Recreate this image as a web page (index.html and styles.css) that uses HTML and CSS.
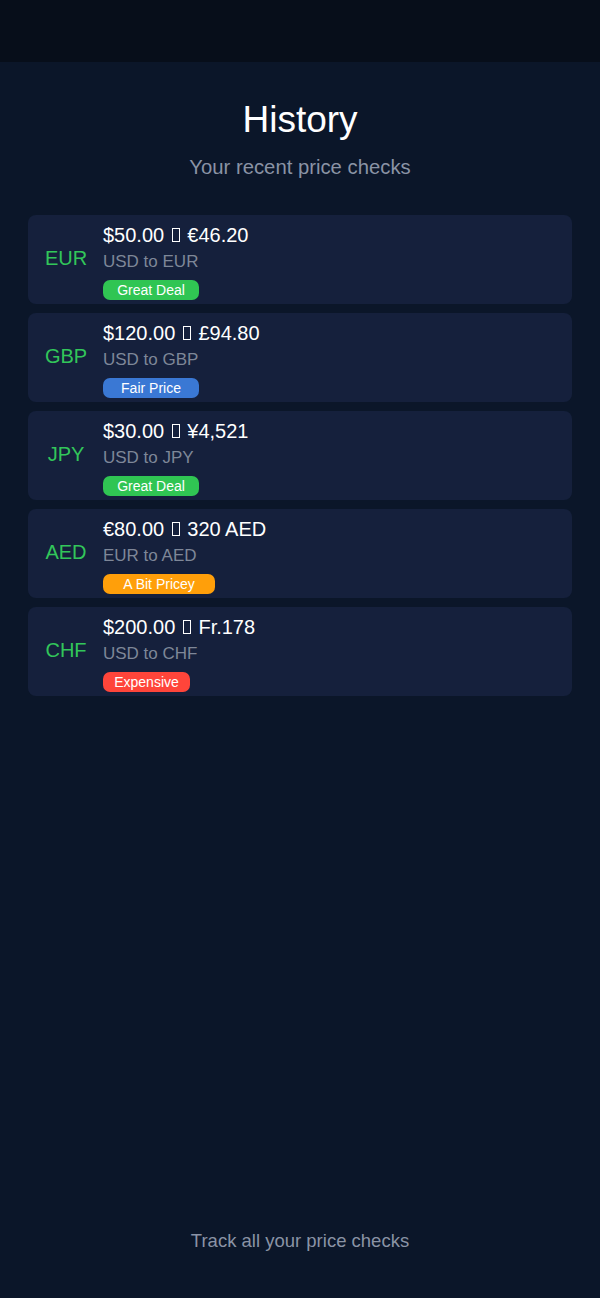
FILE: index.html
```html
<!DOCTYPE html>
<html lang="en">
<head>
<meta charset="utf-8">
<title>History</title>
<link rel="stylesheet" href="styles.css">
</head>
<body>
<div class="topbar"></div>
<main class="page">
  <header class="head">
    <h1 class="title">History</h1>
    <p class="subtitle">Your recent price checks</p>
  </header>
  <ul class="list">
    <li class="card">
      <div class="code">EUR</div>
      <div class="info">
        <div class="amount">$50.00 <span class="tofu"></span> €46.20</div>
        <div class="pair">USD to EUR</div>
        <span class="badge great">Great Deal</span>
      </div>
    </li>
    <li class="card">
      <div class="code">GBP</div>
      <div class="info">
        <div class="amount">$120.00 <span class="tofu"></span> £94.80</div>
        <div class="pair">USD to GBP</div>
        <span class="badge fair">Fair Price</span>
      </div>
    </li>
    <li class="card">
      <div class="code">JPY</div>
      <div class="info">
        <div class="amount">$30.00 <span class="tofu"></span> ¥4,521</div>
        <div class="pair">USD to JPY</div>
        <span class="badge great">Great Deal</span>
      </div>
    </li>
    <li class="card">
      <div class="code">AED</div>
      <div class="info">
        <div class="amount">€80.00 <span class="tofu"></span> 320 AED</div>
        <div class="pair">EUR to AED</div>
        <span class="badge pricey">A Bit Pricey</span>
      </div>
    </li>
    <li class="card">
      <div class="code">CHF</div>
      <div class="info">
        <div class="amount">$200.00 <span class="tofu"></span> Fr.178</div>
        <div class="pair">USD to CHF</div>
        <span class="badge expensive">Expensive</span>
      </div>
    </li>
  </ul>
  <footer class="foot">Track all your price checks</footer>
</main>
</body>
</html>
```

FILE: styles.css
```css
* { box-sizing: border-box; }
html, body {
  margin: 0;
  padding: 0;
  background: #0b1629;
  font-family: "Liberation Sans", Arial, sans-serif;
  color: #ffffff;
}
body {
  display: flex;
  flex-direction: column;
  min-height: 1298px;
}
.topbar {
  height: 62px;
  background: #070e1a;
  flex: none;
}
.page {
  flex: 1;
  display: flex;
  flex-direction: column;
  padding: 36px 28px 46px;
}
.head {
  text-align: center;
}
.title {
  margin: 0;
  font-size: 37px;
  line-height: 44px;
  font-weight: 400;
  color: #ffffff;
}
.subtitle {
  margin: 13px 0 0;
  font-size: 20.3px;
  line-height: 24px;
  color: #8a93a5;
}
.list {
  list-style: none;
  margin: 36px 0 0;
  padding: 0;
  display: flex;
  flex-direction: column;
  gap: 9px;
}
.card {
  height: 89px;
  background: #15203c;
  border-radius: 8px;
  display: flex;
  align-items: center;
  padding: 0 16px 0 16px;
  gap: 15px;
}
.code {
  width: 44px;
  text-align: center;
  font-size: 20px;
  line-height: 23px;
  color: #32c65a;
  margin-top: -2px;
}
.info {
  align-self: stretch;
  display: flex;
  flex-direction: column;
  align-items: flex-start;
  padding-top: 8px;
}
.amount {
  font-size: 20px;
  line-height: 24px;
  color: #ffffff;
  white-space: nowrap;
}
.tofu {
  display: inline-block;
  width: 8px;
  height: 14px;
  border: 1.5px solid #ffffff;
  margin: 0 2px;
  vertical-align: baseline;
}
.pair {
  margin-top: 5px;
  font-size: 17px;
  line-height: 20px;
  color: #7e8798;
}
.badge {
  margin-top: 8px;
  height: 20px;
  line-height: 20px;
  border-radius: 7px;
  font-size: 14px;
  color: #ffffff;
  text-align: center;
  display: block;
}
.great { background: #30c553; width: 96px; }
.fair { background: #3a78d4; width: 96px; }
.pricey { background: #ff9f0a; width: 112px; }
.expensive { background: #ff453a; width: 87px; }
.foot {
  margin-top: auto;
  text-align: center;
  font-size: 18.5px;
  line-height: 22px;
  color: #8a93a5;
}
```
